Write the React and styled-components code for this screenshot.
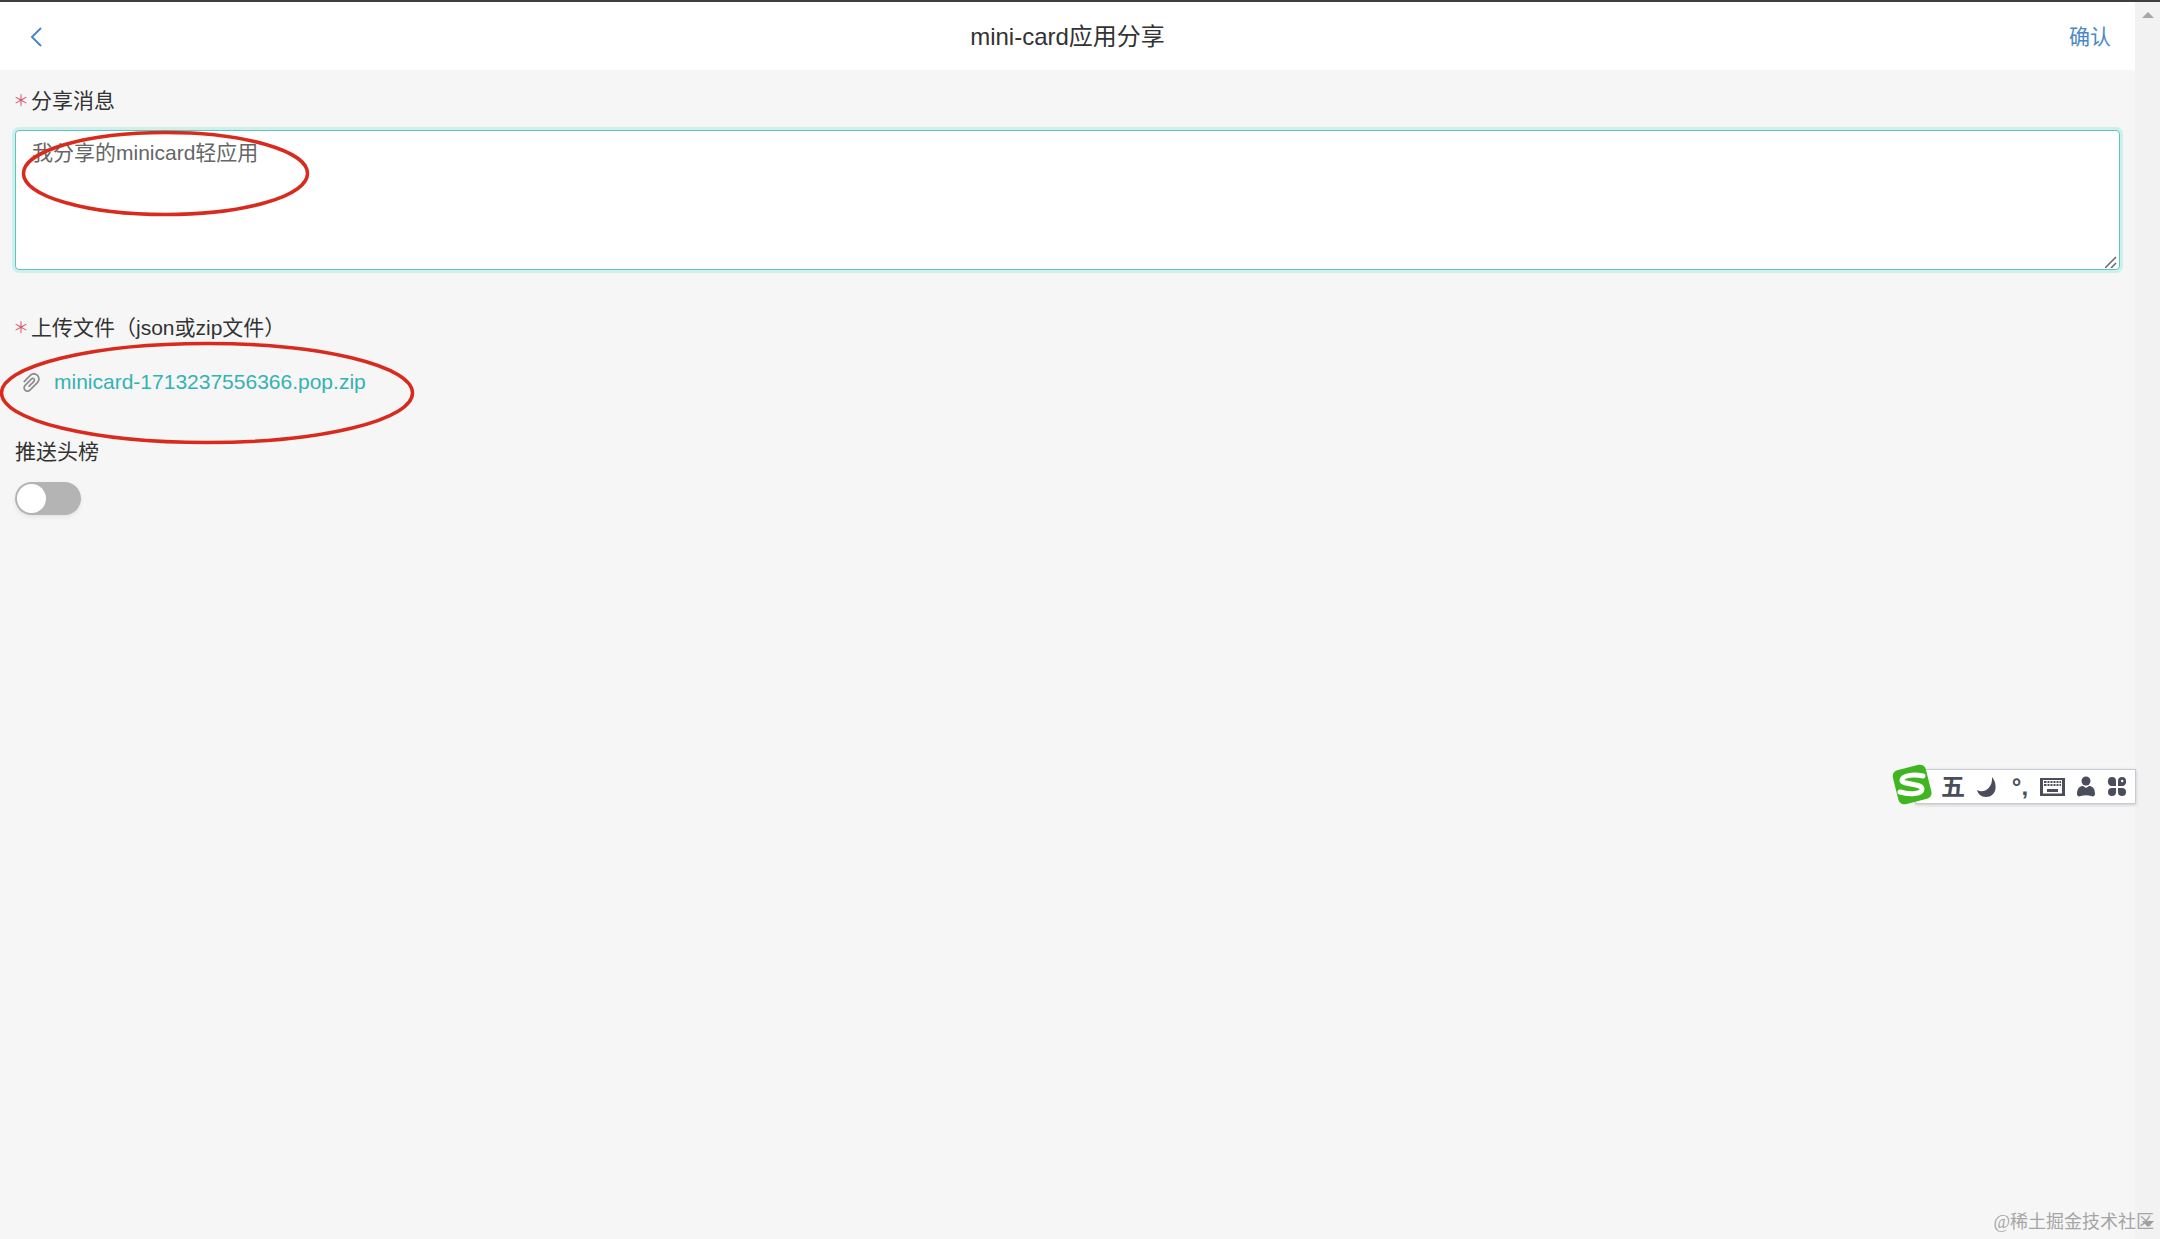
import React from 'react';
import styled, { createGlobalStyle } from 'styled-components';
import { AiOutlinePaperClip } from 'react-icons/ai';

const FONT = '"Liberation Sans", "Noto Sans CJK SC", sans-serif';

const GlobalStyle = createGlobalStyle`
  html, body {
    margin: 0;
    padding: 0;
    height: 100%;
    overflow: hidden;
    background: #f6f6f6;
    font-family: ${FONT};
  }
  #root { height: 100%; }
`;

const Page = styled.div`
  position: relative;
  display: flex;
  flex-direction: column;
  width: 2160px;
  height: 1239px;
  overflow: hidden;
`;

const TopLine = styled.div`
  flex: none;
  height: 2px;
  background: #3f3f3f;
`;

const Body = styled.div`
  flex: 1;
  display: flex;
  min-height: 0;
`;

const Main = styled.main`
  flex: 1;
  min-width: 0;
`;

const ScrollTrack = styled.div`
  flex: none;
  width: 25px;
  display: flex;
  flex-direction: column;
  justify-content: space-between;
  align-items: center;
  padding: 10px 0 12px;
  box-sizing: border-box;
  background: #f2f2f2;
`;

const ScrollArrow = styled.span`
  width: 0;
  height: 0;
  border-left: 6px solid transparent;
  border-right: 6px solid transparent;
  ${({ $down }) =>
    $down ? 'border-top: 6px solid #9a9a9a;' : 'border-bottom: 6px solid #a6a6a6;'}
`;

const Header = styled.header`
  height: 68px;
  display: grid;
  grid-template-columns: 1fr auto 1fr;
  align-items: center;
  padding: 2px 24px 0;
  box-sizing: border-box;
  background: #fff;
`;

const BackIcon = styled.svg`
  width: 16px;
  height: 24px;
  margin-left: 5px;
  fill: none;
  stroke: #4a86c5;
  stroke-width: 2;
`;

const Title = styled.h1`
  margin: 0;
  font-size: 24px;
  font-weight: 400;
  line-height: 32px;
  color: #333;
`;

const ConfirmLink = styled.a`
  justify-self: end;
  font-size: 21px;
  line-height: 30px;
  color: #4a89c8;
`;

const Form = styled.form`
  padding: 14px 15px 0;
`;

const FieldLabel = styled.div`
  display: flex;
  align-items: center;
  height: 30px;
  font-size: 21px;
  color: #333;
`;

const Required = styled.span`
  width: 17px;
  margin-left: -2px;
  margin-right: 1px;
  font-family: "Noto Sans CJK SC", sans-serif;
  font-size: 16px;
  line-height: 30px;
  color: #dc5a72;
`;

const MessageBox = styled.div`
  position: relative;
  margin: 16px 0 41px;
`;

const MessageInput = styled.textarea`
  display: block;
  box-sizing: border-box;
  width: 100%;
  height: 140px;
  padding: 7px 16px;
  border: 1.5px solid #62c2bc;
  border-radius: 4px;
  outline: none;
  resize: none;
  box-shadow: 0 0 0 3px #cdf0ed;
  background: #fff;
  font-family: ${FONT};
  font-size: 21px;
  line-height: 30px;
  color: #666;
`;

const ResizeGrip = styled.svg`
  position: absolute;
  right: 3px;
  bottom: 2px;
  width: 12px;
  height: 12px;
  fill: none;
  stroke: #666;
  stroke-width: 1.5;
`;

const FileRow = styled.div`
  display: flex;
  align-items: center;
  gap: 10px;
  height: 30px;
  margin: 26px 0 38px 4px;
  color: #8d8d8d;
`;

const FileName = styled.a`
  font-size: 21px;
  line-height: 30px;
  color: #35b2b2;
`;

const Switch = styled.div`
  width: 66px;
  height: 33px;
  margin-top: 17px;
  padding: 2px;
  box-sizing: border-box;
  border-radius: 17px;
  background: #b4b4b4;
  box-shadow: 0 2px 4px rgba(0, 0, 0, 0.08);
`;

const Knob = styled.span`
  display: block;
  width: 29px;
  height: 29px;
  border-radius: 50%;
  background: #fff;
`;

const Annotation = styled.svg`
  position: absolute;
  left: ${({ $x }) => $x}px;
  top: ${({ $y }) => $y}px;
  overflow: visible;
  pointer-events: none;
  fill: none;
  stroke: #d92a1e;
  stroke-width: 3.5;
`;

const ImeBar = styled.div`
  position: absolute;
  left: 1915px;
  top: 769px;
  width: 221px;
  height: 35px;
  box-sizing: border-box;
  display: flex;
  align-items: center;
  padding-left: 25px;
  background: #fff;
  border: 1px solid #c6cad2;
  box-shadow: 0 1px 3px rgba(90, 95, 110, 0.3);
  color: #4a4d5c;
`;

const ImeLogo = styled.svg`
  position: absolute;
  left: -26px;
  top: -7px;
  width: 44px;
  height: 43px;
`;

const ImeText = styled.span`
  width: ${({ $w }) => $w}px;
  margin-right: ${({ $gap }) => $gap}px;
  font-size: ${({ $size }) => $size}px;
  line-height: 30px;
  font-weight: 700;
  text-align: center;
  white-space: nowrap;
`;

const ImeIcon = styled.svg`
  flex: none;
  width: ${({ $w }) => $w}px;
  height: 22px;
  margin-right: ${({ $gap }) => $gap}px;
  fill: #4a4d5c;
`;

const Watermark = styled.div`
  position: absolute;
  right: 6px;
  bottom: 6px;
  font-family: "Liberation Serif", "Noto Sans CJK SC", serif;
  font-size: 18px;
  line-height: 22px;
  color: #a5a5a5;
`;

const App = () => (
  <Page>
    <GlobalStyle />
    <TopLine />
    <Body>
      <Main>
        <Header>
          <BackIcon viewBox="0 0 16 24">
            <polyline points="12,3 3,12 12,21" />
          </BackIcon>
          <Title>mini-card应用分享</Title>
          <ConfirmLink>确认</ConfirmLink>
        </Header>
        <Form>
          <FieldLabel>
            <Required>＊</Required>分享消息
          </FieldLabel>
          <MessageBox>
            <MessageInput readOnly defaultValue="我分享的minicard轻应用" />
            <ResizeGrip viewBox="0 0 12 12">
              <path d="M0 12 L11 1 M6 12 L11 7" />
            </ResizeGrip>
          </MessageBox>
          <FieldLabel>
            <Required>＊</Required>上传文件（json或zip文件）
          </FieldLabel>
          <FileRow>
            <AiOutlinePaperClip size={25} />
            <FileName>minicard-1713237556366.pop.zip</FileName>
          </FileRow>
          <FieldLabel>推送头榜</FieldLabel>
          <Switch>
            <Knob />
          </Switch>
        </Form>
      </Main>
      <ScrollTrack>
        <ScrollArrow />
        <ScrollArrow $down />
      </ScrollTrack>
    </Body>

    <Annotation $x={22} $y={131} width="287" height="85" viewBox="0 0 287 85">
      <ellipse cx="143.5" cy="42.5" rx="142" ry="41" />
    </Annotation>
    <Annotation $x={0} $y={342} width="414" height="102" viewBox="0 0 414 102">
      <ellipse cx="207" cy="51" rx="205.5" ry="49.5" />
    </Annotation>

    <ImeBar>
      <ImeLogo viewBox="0 0 44 43">
        <rect x="5" y="4" width="34" height="35" rx="6" fill="#3fb61f" transform="rotate(-14 22 21)" />
        <path
          d="M33 13 C24 11 13 12 12 17 C11 22 32 20 32 26 C32 31 20 32 10 29"
          fill="none"
          stroke="#fff"
          strokeWidth="5"
          strokeLinecap="round"
        />
      </ImeLogo>
      <ImeText $w={24} $gap={12} $size={24}>五</ImeText>
      <ImeIcon $w={22} $gap={11} viewBox="0 0 22 22">
        <path d="M15 1 C21 8 20 21 9 21 C4 21 1 18 0 14 C7 18 16 12 15 1 Z" />
      </ImeIcon>
      <ImeText $w={20} $gap={10} $size={24}>°,</ImeText>
      <ImeIcon $w={25} $gap={12} viewBox="0 0 25 22">
        <path
          fillRule="evenodd"
          d="M0 2 H25 V20 H0 Z M3 4 V17.5 H22 V4 Z"
        />
        <path d="M4 5 H21 V10 H4 Z M7 13 H18 V16 H7 Z" />
        <path
          stroke="#fff"
          strokeWidth="1"
          d="M4 7.5 H21 M7 5 V10 M10 5 V10 M13 5 V10 M16 5 V10 M19 5 V10"
        />
      </ImeIcon>
      <ImeIcon $w={18} $gap={12} viewBox="0 0 18 22">
        <circle cx="9" cy="5" r="4.5" />
        <path d="M0 18 C0 12 3 10 6 10 L9 12 L12 10 C15 10 18 12 18 18 C18 20 16 21 14 20 C11 19 7 19 4 20 C2 21 0 20 0 18 Z" />
      </ImeIcon>
      <ImeIcon $w={20} $gap={0} viewBox="0 0 20 22">
        <path d="M1 5 A4 4 0 0 1 9 5 V10 H5 A4 4 0 0 1 1 5 Z" />
        <path
          fillRule="evenodd"
          d="M11 5 A4 4 0 0 1 19 5 A4 4 0 0 1 15 10 H11 Z M14 5 A1.2 1.2 0 1 0 16.4 5 A1.2 1.2 0 1 0 14 5 Z"
        />
        <path d="M1 16 A4 4 0 0 1 5 12 H9 V16 A4 4 0 0 1 1 16 Z" />
        <path d="M11 12 H15 A4 4 0 0 1 15 20 A4 4 0 0 1 11 16 Z" />
      </ImeIcon>
    </ImeBar>

    <Watermark>@稀土掘金技术社区</Watermark>
  </Page>
);

export default App;
